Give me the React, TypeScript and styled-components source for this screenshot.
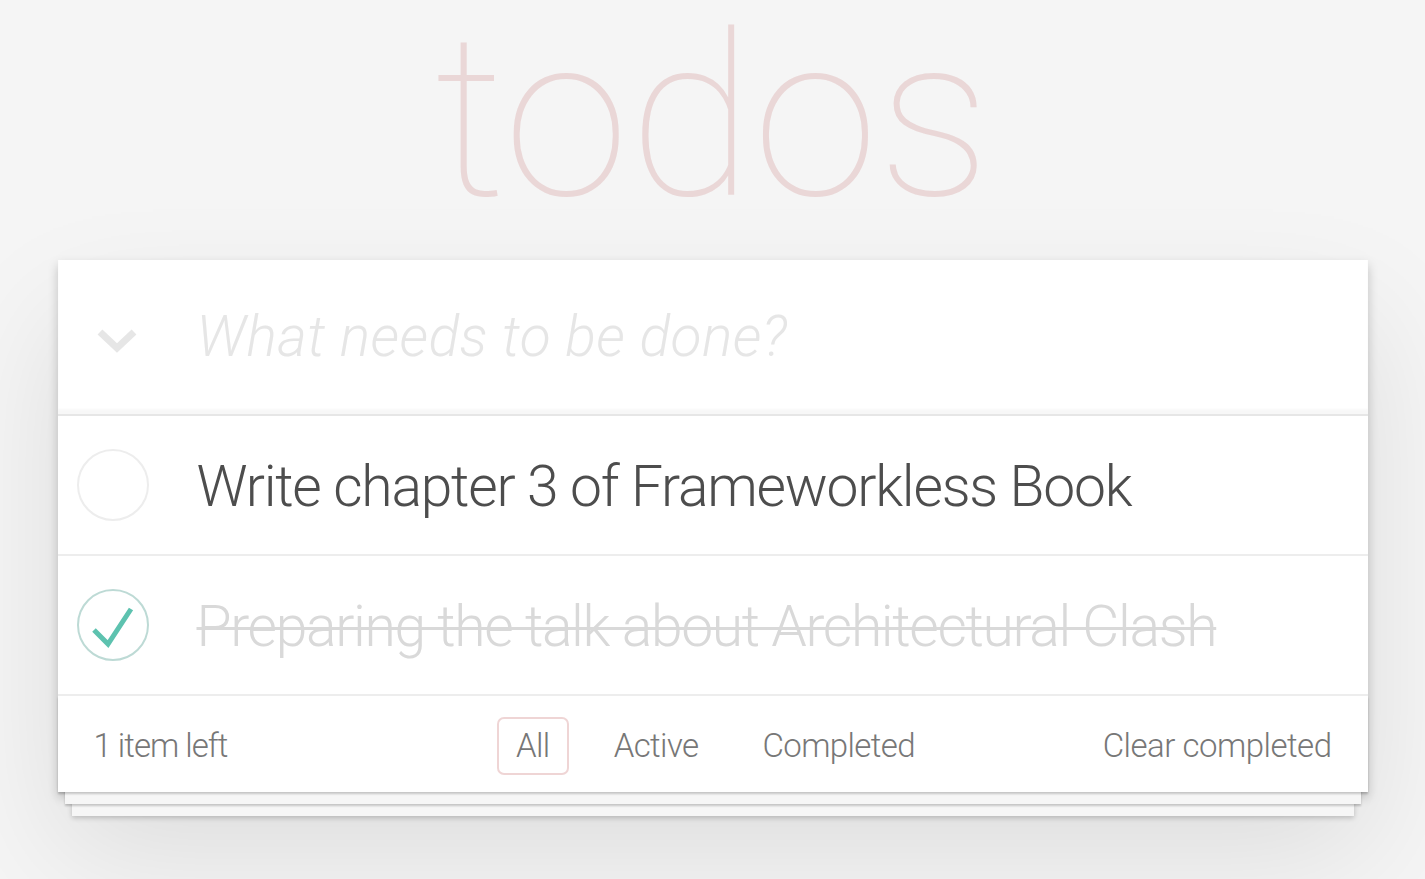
import React from "react";
import styled, { createGlobalStyle } from "styled-components";

const Global = createGlobalStyle`
  html, body { margin: 0; padding: 0; }
  body {
    background: #f5f5f5;
    font-family: Roboto, "Helvetica Neue", Helvetica, Arial, sans-serif;
    font-weight: 300;
    color: #4d4d4d;
    -webkit-font-smoothing: antialiased;
  }
`;

const Page = styled.div`
  min-height: 879px;
  padding-top: 2px;
  box-sizing: border-box;
  display: flex;
  flex-direction: column;
  align-items: center;
`;

const Title = styled.h1`
  margin: 0 0 28px;
  height: 230px;
  width: 1310px;
  font-size: 227px;
  line-height: 230px;
  font-weight: 100;
  text-align: center;
  color: rgba(175, 47, 47, 0.15);
  text-rendering: optimizeLegibility;
`;

const Card = styled.section`
  width: 1310px;
  background: #fff;
  position: relative;
  box-shadow: 0 5px 10px 0 rgba(0, 0, 0, 0.2), 0 60px 120px 0 rgba(0, 0, 0, 0.1);
`;

const HeaderRow = styled.header`
  display: grid;
  grid-template-columns: 139px 1fr;
  align-items: center;
  height: 154px;
  box-shadow: inset 0 -5px 2px rgba(0, 0, 0, 0.03);
`;

const ToggleAll = styled.svg`
  justify-self: start;
  margin-left: 38px;
  margin-top: 6px;
`;

const NewTodo = styled.input`
  border: none;
  outline: none;
  background: transparent;
  padding: 0 36px 0 0;
  margin: 0;
  width: 100%;
  box-sizing: border-box;
  font-family: inherit;
  font-size: 57px;
  font-weight: 300;
  line-height: 80px;
  letter-spacing: 0.4px;
  color: #4d4d4d;
  &::placeholder {
    font-style: italic;
    font-weight: 300;
    color: #e6e6e6;
  }
`;

const List = styled.ul`
  list-style: none;
  margin: 0;
  padding: 0;
  border-top: 2px solid #e6e6e6;
`;

const Row = styled.li`
  display: grid;
  grid-template-columns: 139px 1fr;
  align-items: center;
  border-bottom: 2px solid #ededed;
`;

const Toggle = styled.svg`
  justify-self: start;
  margin-left: 19px;
`;

const Label = styled.label<{ $done?: boolean }>`
  display: block;
  padding: 37px 36px 33px 0;
  font-size: 57px;
  line-height: 68px;
  letter-spacing: ${(p) => (p.$done ? "-1.35px" : "-1.25px")};
  white-space: nowrap;
  color: ${(p) => (p.$done ? "#d9d9d9" : "#4d4d4d")};
  text-decoration: ${(p) => (p.$done ? "line-through" : "none")};
  text-decoration-thickness: 3px;
`;

const Footer = styled.footer`
  position: relative;
  display: grid;
  grid-template-columns: 1fr auto 1fr;
  align-items: center;
  height: 96px;
  padding: 0 36px;
  box-sizing: border-box;
  font-size: 33px;
  letter-spacing: -0.6px;
  color: #777;
  &::before {
    content: "";
    position: absolute;
    inset: 0;
    pointer-events: none;
    box-shadow: 0 2px 2px rgba(0, 0, 0, 0.2), 0 19px 0 -7px #f6f6f6,
      0 21px 2px -7px rgba(0, 0, 0, 0.2), 0 38px 0 -14px #f6f6f6,
      0 40px 5px -14px rgba(0, 0, 0, 0.2);
  }
`;

const Count = styled.span`
  justify-self: start;
  line-height: 40px;
  margin-top: 3px;
  letter-spacing: -1px;
`;

const Filters = styled.ul`
  list-style: none;
  margin: 3px 0 0 6px;
  padding: 0;
  display: flex;
  gap: 26px;
  position: relative;
`;

const FilterLink = styled.a<{ $selected?: boolean }>`
  display: block;
  padding: 7px 17px;
  line-height: 40px;
  border: 2px solid ${(p) => (p.$selected ? "rgba(175, 47, 47, 0.2)" : "transparent")};
  border-radius: 7px;
  color: inherit;
  text-decoration: none;
  cursor: pointer;
`;

const Clear = styled.button`
  justify-self: end;
  position: relative;
  border: none;
  background: none;
  padding: 0;
  margin: 3px 0 0;
  font-family: inherit;
  font-size: 33px;
  font-weight: 300;
  line-height: 40px;
  letter-spacing: -0.5px;
  color: #777;
  cursor: pointer;
`;

const Chevron = () => (
  <ToggleAll width="42" height="28" viewBox="0 0 42 28">
    <polyline
      points="4,6 21,22 38,6"
      fill="none"
      stroke="#e6e6e6"
      strokeWidth="7"
      strokeLinejoin="miter"
    />
  </ToggleAll>
);

const Check = ({ done }: { done: boolean }) => (
  <Toggle width="72" height="72" viewBox="0 0 72 72">
    <circle cx="36" cy="36" r="35" fill="none" stroke={done ? "#bddad5" : "#ededed"} strokeWidth="2" />
    {done && (
      <polyline
        points="17,41 31,55 54,20"
        fill="none"
        stroke="#5dc2af"
        strokeWidth="5"
        strokeLinejoin="miter"
      />
    )}
  </Toggle>
);

const todos = [
  { text: "Write chapter 3 of Frameworkless Book", done: false },
  { text: "Preparing the talk about Architectural Clash", done: true },
];

export default function App() {
  return (
    <>
      <Global />
      <Page>
        <Title>todos</Title>
        <Card>
          <HeaderRow>
            <Chevron />
            <NewTodo placeholder="What needs to be done?" />
          </HeaderRow>
          <List>
            {todos.map((t) => (
              <Row key={t.text}>
                <Check done={t.done} />
                <Label $done={t.done}>{t.text}</Label>
              </Row>
            ))}
          </List>
          <Footer>
            <Count>1 item left</Count>
            <Filters>
              <li><FilterLink $selected>All</FilterLink></li>
              <li><FilterLink>Active</FilterLink></li>
              <li><FilterLink>Completed</FilterLink></li>
            </Filters>
            <Clear>Clear completed</Clear>
          </Footer>
        </Card>
      </Page>
    </>
  );
}
